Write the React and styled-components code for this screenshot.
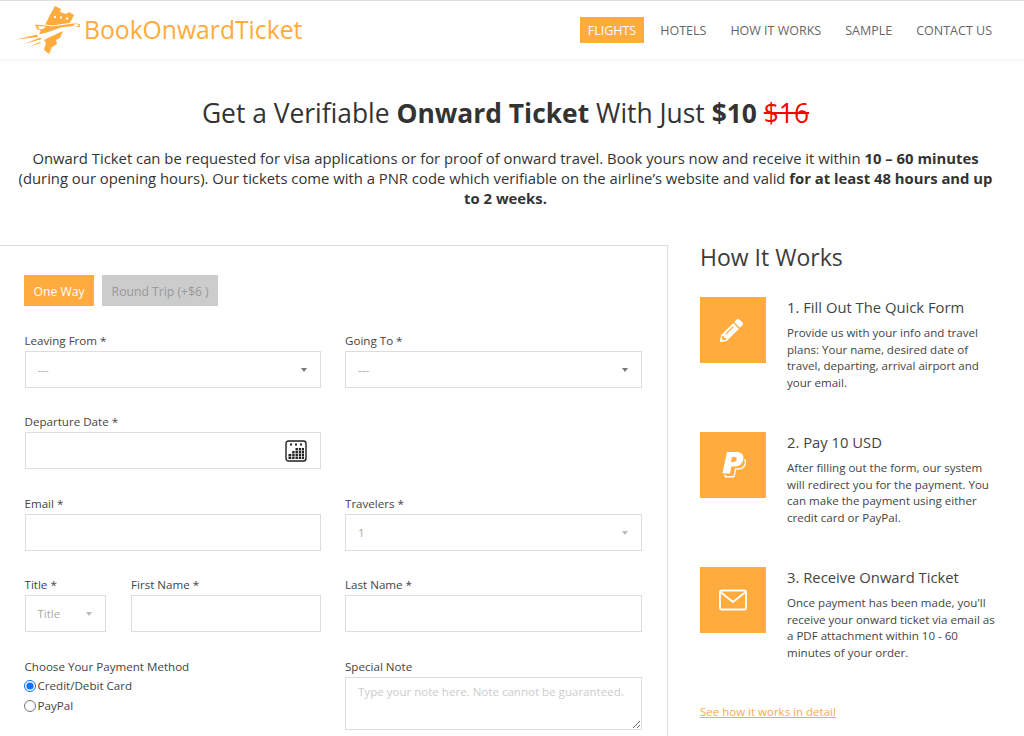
import styled, { createGlobalStyle } from "styled-components";
import { FaPencilAlt } from "react-icons/fa";

const orange = "#ffab3d";

const GlobalStyle = createGlobalStyle`
  html, body {
    margin: 0;
    padding: 0;
    background: #fff;
    font-family: "Open Sans", "Liberation Sans", sans-serif;
    color: #333;
    overflow: hidden;
  }
  * { box-sizing: border-box; }
`;

const Page = styled.div`
  width: 1024px;
  height: 736px;
  overflow: hidden;
`;

const Header = styled.header`
  height: 59px;
  border-top: 1px solid #ddd;
  display: flex;
  align-items: center;
  justify-content: space-between;
  padding: 0 24px 0 15px;
  box-shadow: 0 0 6px rgba(0, 0, 0, 0.08);
`;

const Brand = styled.div`
  display: flex;
  align-items: center;
  gap: 3px;
  color: ${orange};
  font-size: 24.7px;
  line-height: 32px;
`;

const Nav = styled.nav`
  display: flex;
  gap: 8px;
  align-items: center;
`;

const NavItem = styled.a`
  font-size: 12.5px;
  line-height: 27px;
  height: 26px;
  padding: 0 8px;
  color: ${(p) => (p.$active ? "#fff" : "#666")};
  background: ${(p) => (p.$active ? orange : "transparent")};
`;

const Intro = styled.section`
  padding: 37px 29px 0 16px;
  text-align: center;
  height: 186px;
`;

const Headline = styled.h1`
  margin: 0 0 16.5px;
  font-size: 26.4px;
  line-height: 35px;
  font-weight: 400;
  color: #333;

  b { font-weight: 700; }
  s { color: #f00; }
`;

const Lead = styled.p`
  margin: 0 auto;
  font-size: 14.83px;
  line-height: 20px;
  color: #333;

  b { font-weight: 700; }
`;

const Columns = styled.div`
  display: flex;
`;

const FormPanel = styled.form`
  width: 668px;
  height: 500px;
  border-top: 1px solid #ddd;
  border-right: 1px solid #ddd;
  padding: 29px 24px 0 24.5px;
`;

const TripTabs = styled.div`
  display: flex;
  gap: 8px;
  margin: 0 0 26.75px -0.5px;
`;

const TripTab = styled.button`
  height: 31px;
  padding: 1px 8.5px 0;
  border: 1px solid ${(p) => (p.$active ? orange : "#ccc")};
  background: ${(p) => (p.$active ? orange : "#ccc")};
  color: ${(p) => (p.$active ? "#fff" : "#999")};
  font: 400 12.2px "Open Sans", sans-serif;
`;

const FieldRow = styled.div`
  display: grid;
  grid-template-columns: 296.5px 297px;
  column-gap: 24px;
  margin-bottom: 26.5px;
`;

const NameGroup = styled.div`
  display: grid;
  grid-template-columns: 81.5px 190px;
  column-gap: 25px;
`;

const Field = styled.label`
  display: block;
  position: relative;
`;

const LabelText = styled.span`
  display: block;
  font-size: 11.6px;
  line-height: 16px;
  height: 18px;
  color: #444;
`;

const TextInput = styled.input`
  display: block;
  width: 100%;
  height: 37px;
  border: 1px solid #ddd;
  background: #fff;
  outline: none;
  padding: 0 12px;
`;

const SelectBox = styled.div`
  position: relative;
  height: 37px;
  border: 1px solid #ddd;
  padding: 0 12px;
  font-size: 11.5px;
  line-height: 35px;
  color: #aaa;
`;

const Caret = styled.span`
  position: absolute;
  right: 13px;
  top: 16px;
  border-left: 3px solid transparent;
  border-right: 3px solid transparent;
  border-top: 4px solid ${(p) => (p.$muted ? "#bbb" : "#777")};
`;

const CalendarIcon = styled.svg`
  position: absolute;
  right: 14px;
  bottom: 7px;
`;

const RadioGroup = styled.div`
  margin: -1px 0 0 -0.5px;
`;

const RadioRow = styled.label`
  display: flex;
  align-items: center;
  gap: 1.5px;
  height: 20px;
  font-size: 11.6px;
  color: #444;
`;

const Radio = styled.input`
  margin: 0;
  width: 12px;
  height: 12px;
`;

const NoteArea = styled.textarea`
  display: block;
  width: 100%;
  height: 53px;
  border: 1px solid #ddd;
  padding: 6px 8px 6px 12px;
  outline: none;
  font: 400 11.55px/16px "Open Sans", sans-serif;

  &::placeholder { color: #ccc; opacity: 1; }
`;

const Side = styled.aside`
  width: 356px;
  padding: 0 24px 0 32px;
`;

const SideTitle = styled.h2`
  margin: -1px 0 27px;
  font-size: 23px;
  line-height: 26px;
  font-weight: 400;
  color: #3c3c3c;
`;

const Step = styled.div`
  display: flex;
  gap: 21px;
  height: 135px;
`;

const StepIcon = styled.div`
  flex: none;
  width: 66px;
  height: 66px;
  background: ${orange};
  color: #fff;
  display: flex;
  align-items: center;
  justify-content: center;
`;

const PencilIcon = styled(FaPencilAlt)`
  margin-right: 3px;
`;

const StepBody = styled.div`
  flex: 1;
`;

const StepTitle = styled.h3`
  margin: 0 0 8px;
  font-size: 14.8px;
  line-height: 20px;
  font-weight: 400;
  color: #444;
`;

const StepText = styled.p`
  margin: 0;
  font-size: 11.55px;
  line-height: 16.5px;
  color: #444;
`;

const DetailLink = styled.a`
  display: block;
  font-size: 11.5px;
  line-height: 16px;
  color: ${orange};
  text-decoration: underline;
  margin-top: 2px;
`;

function Logo() {
  return (
    <svg width="66" height="52" viewBox="15 4 66 52">
      <path
        fill={orange}
        d="M50 15l5-9 6 3-1 3 6 2 3-2 5 3-3 6-3 4-24 2z"
      />
      <path
        fill={orange}
        d="M50 37l13-6-3 7-4 2 1 4-5 3-3 7-5-4 2-7-2-3z"
      />
      <path
        fill={orange}
        stroke="#fff"
        strokeWidth="1.2"
        d="M81 26c0-3-4-3.500-8-3l-21 3-6-1-12-1 3 6 3 1-2 4 9-2 14-5 12-1.500C76.500 28 81 28 81 26z"
      />
      <path
        fill={orange}
        d="M16 39.500l21-5 1 2.500zM24 44l16-6.500 2 1.500zM29 47l11-5 1 1z"
      />
      <path
        fill="#fff"
        d="M38 26l8 .5-3 2.500-4 .5zM74 24.500c2.500-.5 5 0 5 1.300-1.500.8-4 1-5.500 1zM54 16h2v2h-2zM60 16.500h2v2h-2zM66 17.500h2v2h-2z"
      />
    </svg>
  );
}

function Select({ value, muted }) {
  return (
    <SelectBox>
      {value}
      <Caret $muted={muted} />
    </SelectBox>
  );
}

export default function App() {
  return (
    <Page>
      <GlobalStyle />
      <Header>
        <Brand>
          <Logo />
          BookOnwardTicket
        </Brand>
        <Nav>
          <NavItem $active>FLIGHTS</NavItem>
          <NavItem>HOTELS</NavItem>
          <NavItem>HOW IT WORKS</NavItem>
          <NavItem>SAMPLE</NavItem>
          <NavItem>CONTACT US</NavItem>
        </Nav>
      </Header>

      <Intro>
        <Headline>
          Get a Verifiable <b>Onward Ticket</b> With Just <b>$10</b>{" "}
          <s>$16</s>
        </Headline>
        <Lead>
          Onward Ticket can be requested for visa applications or for proof of
          onward travel. Book yours now and receive it within{" "}
          <b>10 – 60 minutes</b> (during our opening hours). Our tickets come
          with a PNR code which verifiable on the airline’s website and valid{" "}
          <b>for at least 48 hours and up to 2 weeks.</b>
        </Lead>
      </Intro>

      <Columns>
        <FormPanel>
          <TripTabs>
            <TripTab type="button" $active>
              One Way
            </TripTab>
            <TripTab type="button">Round Trip (+$6 )</TripTab>
          </TripTabs>

          <FieldRow>
            <Field>
              <LabelText>Leaving From *</LabelText>
              <Select value="---" />
            </Field>
            <Field>
              <LabelText>Going To *</LabelText>
              <Select value="---" />
            </Field>
          </FieldRow>

          <FieldRow>
            <Field>
              <LabelText>Departure Date *</LabelText>
              <TextInput readOnly />
              <CalendarIcon width="22" height="22" viewBox="0 0 22 22">
                <rect x="1" y="1" width="20" height="20" rx="2.500" fill="#fff" stroke="#222" strokeWidth="1.400" />
                <path
                  fill="#222"
                  d="M5 3.500h2v2H5zM10 3.500h2v2h-2zM15 3.500h2v2h-2zM10.500 8h2.400v2.400h-2.400zM13.800 8h2.400v2.400h-2.400zM17 8h2v2.400h-2zM7.200 11h2.400v2.400H7.200zM10.500 11h2.400v2.400h-2.400zM13.800 11h2.400v2.400h-2.400zM17 11h2v2.400h-2zM3.500 14h2.800v2.400H3.500zM7.200 14h2.400v2.400H7.200zM10.500 14h2.400v2.400h-2.400zM13.800 14h2.400v2.400h-2.400zM17 14h2v2.400h-2zM3.500 17h2.800v2H3.500zM7.200 17h2.400v2H7.200zM10.500 17h2.400v2h-2.400zM13.800 17h2.400v2h-2.400zM17 17h2v2h-2z"
                />
              </CalendarIcon>
            </Field>
          </FieldRow>

          <FieldRow>
            <Field>
              <LabelText>Email *</LabelText>
              <TextInput readOnly />
            </Field>
            <Field>
              <LabelText>Travelers *</LabelText>
              <Select value="1" muted />
            </Field>
          </FieldRow>

          <FieldRow>
            <NameGroup>
              <Field>
                <LabelText>Title *</LabelText>
                <Select value="Title" muted />
              </Field>
              <Field>
                <LabelText>First Name *</LabelText>
                <TextInput readOnly />
              </Field>
            </NameGroup>
            <Field>
              <LabelText>Last Name *</LabelText>
              <TextInput readOnly />
            </Field>
          </FieldRow>

          <FieldRow>
            <div>
              <LabelText>Choose Your Payment Method</LabelText>
              <RadioGroup>
                <RadioRow>
                  <Radio type="radio" name="pay" defaultChecked />
                  Credit/Debit Card
                </RadioRow>
                <RadioRow>
                  <Radio type="radio" name="pay" />
                  PayPal
                </RadioRow>
              </RadioGroup>
            </div>
            <Field>
              <LabelText>Special Note</LabelText>
              <NoteArea placeholder="Type your note here. Note cannot be guaranteed." />
            </Field>
          </FieldRow>
        </FormPanel>

        <Side>
          <SideTitle>How It Works</SideTitle>
          <Step>
            <StepIcon>
              <PencilIcon size={23} />
            </StepIcon>
            <StepBody>
              <StepTitle>1. Fill Out The Quick Form</StepTitle>
              <StepText>
                Provide us with your info and travel plans: Your name, desired
                date of travel, departing, arrival airport and your email.
              </StepText>
            </StepBody>
          </Step>
          <Step>
            <StepIcon>
              <svg width="26" height="28" viewBox="0 0 26 28">
                <path
                  fill="#fff"
                  d="M7 1h9c5 0 8 2.500 7.400 7-.7 5-4.400 7.500-9 7.500h-3l-1.300 7H3.500c-.6 0-1-.4-.9-1zM12 6l-1 5h2c2 0 3.500-1 3.700-2.700C17 6.800 16 6 14 6z"
                />
                <path
                  fill="none"
                  stroke="#fff"
                  strokeWidth="1.400"
                  d="M24.500 8.500c1 1 1.200 2.500.7 4.300-1 3.700-4 5.200-7.200 5.200h-2.500l-1.200 6.700c-.1.600-.5 1-1.100 1H6c-.7 0-1-.4-.9-1l.2-1"
                />
              </svg>
            </StepIcon>
            <StepBody>
              <StepTitle>2. Pay 10 USD</StepTitle>
              <StepText>
                After filling out the form, our system will redirect you for the
                payment. You can make the payment using either credit card or
                PayPal.
              </StepText>
            </StepBody>
          </Step>
          <Step>
            <StepIcon>
              <svg width="28" height="22" viewBox="0 0 28 22" fill="none" stroke="#fff" strokeWidth="1.800">
                <rect x="1" y="1.500" width="26" height="19" rx="1.500" />
                <path d="M1.500 3l12.500 10L26.500 3" />
              </svg>
            </StepIcon>
            <StepBody>
              <StepTitle>3. Receive Onward Ticket</StepTitle>
              <StepText>
                Once payment has been made, you'll receive your onward ticket
                via email as a PDF attachment within 10 - 60 minutes of your
                order.
              </StepText>
            </StepBody>
          </Step>
          <DetailLink>See how it works in detail</DetailLink>
        </Side>
      </Columns>
    </Page>
  );
}
